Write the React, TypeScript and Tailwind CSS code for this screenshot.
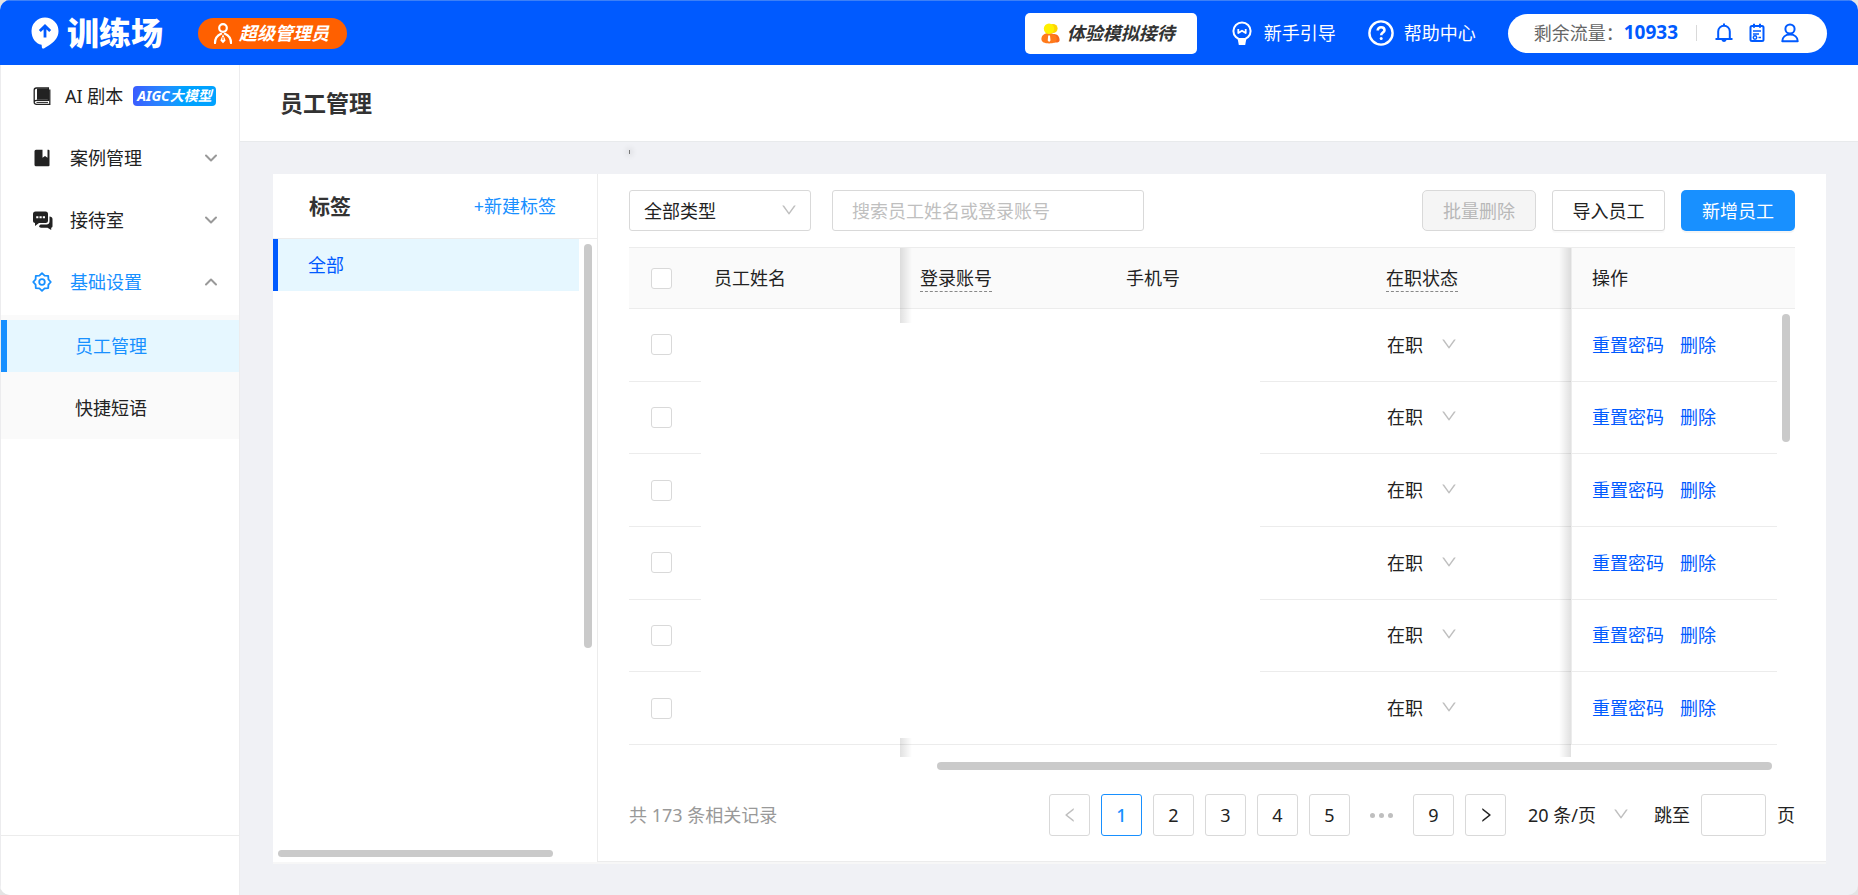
import { useState } from 'react';
import { AiOutlineDown, AiOutlineLeft, AiOutlineRight } from 'react-icons/ai';
import { ChevronDown, ChevronUp } from 'lucide-react';
import clsx from 'clsx';

type Employee = {
  id: number;
  status: string;
};

const employees: Employee[] = [1, 2, 3, 4, 5, 6].map(id => ({ id, status: '在职' }));

const pages = [1, 2, 3, 4, 5];

function LogoIcon() {
  return (
    <svg width="28" height="32" viewBox="0 0 28 32" fill="none">
      <path d="M14 0.5a13.5 13.5 0 0 1 13.5 13.5c0 6.2-3.6 10.2-8 13.2-2.4 1.7-4.6 3.2-6.6 4.2-1 .5-1.9 0-2-1l-.3-2.6C4.600 26.800.5 21 .5 14A13.500 13.500 0 0 1 14 .5z" fill="#fff" />
      <path d="M14 20.500V9.500M8.800 14 14 9l5.200 5" stroke="#005aff" strokeWidth="2.800" />
    </svg>
  );
}

function AdminIcon() {
  return (
    <svg width="20" height="21" viewBox="0 0 20 21" fill="none" stroke="#fff" strokeWidth="2.200">
      <circle cx="10" cy="5" r="3.800" />
      <path d="M2 20c0-4.500 2.200-7.500 6-9.200M18 20c0-4.500-2.200-7.500-6-9.200" strokeLinecap="round" />
      <path d="M10 11l2.600 6.500L10 20.200l-2.600-2.700z" fill="#fff" stroke="none" />
      <path d="M10 14v3" stroke="#ff6000" strokeWidth="1" />
    </svg>
  );
}

function ReceptionIcon() {
  return (
    <svg width="19" height="21" viewBox="0 0 19 21">
      <circle cx="12" cy="5.500" r="4.600" fill="#ffd500" />
      <path d="M9 19.500c0-5 1-8.500 4-8.500 3.500 0 5.600 2.800 5.600 6.200 0 1.700-1.600 2.300-3.600 2.300z" fill="#f9661b" />
      <path d="M.4 16c0-3.600 3-6 7.600-6s7.800 2.400 7.800 6c0 3.200-3.200 4.400-7.700 4.400S.4 19.200.4 16z" fill="#ff7a1a" />
      <path d="M7.200 12.500h1.800l.5 5-1.400 1.400-1.400-1.400z" fill="#fff" />
      <circle cx="8" cy="5.800" r="5.200" fill="#fff000" />
    </svg>
  );
}

function BulbIcon() {
  return (
    <svg width="20" height="24" viewBox="0 0 20 24" fill="none">
      <circle cx="10" cy="10" r="8.600" stroke="#fff" strokeWidth="2" />
      <path d="M6.300 8v4l3.700-2.300 3.700 2.300V8" stroke="#fff" strokeWidth="1.800" strokeLinejoin="round" />
      <path d="M5.500 17h9l-1.300 7H6.800z" fill="#fff" />
    </svg>
  );
}

function HelpIcon() {
  return (
    <svg width="26" height="26" viewBox="0 0 26 26" fill="none" stroke="#fff">
      <circle cx="13" cy="13" r="11.600" strokeWidth="2.400" />
      <path d="M9.700 10.500c0-2 1.400-3.300 3.400-3.300s3.400 1.200 3.400 3c0 2.300-3.300 2.500-3.300 5" strokeWidth="2.600" />
      <circle cx="13.200" cy="18.400" r="1.500" fill="#fff" stroke="none" />
    </svg>
  );
}

function BellIcon() {
  return (
    <svg width="18" height="20" viewBox="0 0 18 20" fill="none" stroke="#005aff" strokeWidth="2">
      <path d="M3.200 16V8.500a5.800 5.800 0 0 1 11.600 0V16M.5 16h17M9 .5v2" />
      <path d="M6.500 17h5c-.3 1.300-1.300 2-2.500 2s-2.200-.7-2.500-2z" fill="#005aff" stroke="none" />
    </svg>
  );
}

function NoteIcon() {
  return (
    <svg width="16" height="20" viewBox="0 0 16 20" fill="none" stroke="#005aff">
      <rect x="1.500" y="3" width="13" height="15" rx="1.500" strokeWidth="2" />
      <path d="M5 .8v4M11 .8v4" strokeWidth="2" />
      <path d="M4 8h8M4 11h6" strokeWidth="1.500" />
      <circle cx="6" cy="14.500" r="1.700" strokeWidth="1.500" />
      <path d="M9.500 14.500h2.500" strokeWidth="1.500" />
    </svg>
  );
}

function UserIcon() {
  return (
    <svg width="18" height="20" viewBox="0 0 18 20" fill="none" stroke="#005aff" strokeWidth="2">
      <circle cx="9" cy="6" r="4.600" />
      <path d="M1.300 18.200c0-4 3-6.600 7.700-6.600s7.700 2.600 7.700 6.600z" strokeLinejoin="round" />
    </svg>
  );
}

function BookIcon() {
  return (
    <svg width="18" height="19" viewBox="0 0 18 19" fill="none">
      <path d="M16.800 2.500v14.800H3.600c-1.500 0-2.400-.8-2.400-2.100V3.200C1.200 1.800 2 1 3.400 1h12v12.300H3.600c-1.400 0-2.300.7-2.400 1.800" stroke="#222" strokeWidth="1.300" />
      <path d="M4 1.500h11.400v11.200H4z" fill="#222" />
      <path d="M3.500 15.400H15" stroke="#222" strokeWidth="1" />
    </svg>
  );
}

function CaseIcon() {
  return (
    <svg width="18" height="18" viewBox="0 0 18 18">
      <path d="M3 .8h6.500v8L12 7l2.500 1.800v-8h1a1 1 0 0 1 1 1v14.400a1 1 0 0 1-1 1H3a1.500 1.500 0 0 1-1.500-1.500V2.300A1.500 1.500 0 0 1 3 .8z" fill="#222" />
    </svg>
  );
}

function ChatIcon() {
  return (
    <svg width="20" height="19" viewBox="0 0 20 19">
      <path d="M2.500.5h10A2.500 2.500 0 0 1 15 3v6.500a2.500 2.500 0 0 1-2.500 2.500H6l-4 3v-3A2.200 2.200 0 0 1 0 9.600V3A2.500 2.500 0 0 1 2.500.5z" fill="#222" />
      <path d="M16.500 5.500c1.800 0 3 1 3 2.500v7c0 1-.5 1.500-1.300 1.700V19l-3.700-2.300H8c-1 0-1.800-.6-2-1.700l1.500-1.400h6c1.800 0 3-1.200 3-3z" fill="#222" />
      <path d="M3.200 5.200h2.200v2H3.200zM6.500 5.200h2.200v2H6.500zM9.800 5.200H12v2H9.800z" fill="#fff" />
    </svg>
  );
}

function GearIcon() {
  return (
    <svg width="20" height="20" viewBox="0 0 20 20" fill="none" stroke="#1890ff" strokeWidth="1.800" strokeLinejoin="round">
      <path d="M10 1.200 12.600 3.600 16.200 3.800 16.400 7.400 18.800 10 16.400 12.600 16.200 16.200 12.600 16.400 10 18.800 7.400 16.400 3.800 16.200 3.600 12.600 1.200 10 3.600 7.400 3.800 3.800 7.400 3.600z" />
      <circle cx="10" cy="10" r="2.800" />
    </svg>
  );
}

function Header() {
  return (
    <header className="flex h-[65px] shrink-0 items-center border-t border-[#3d80f6] bg-[#005aff] pr-[31px] pl-[31px] text-lg text-white">
      <div className="flex items-center gap-2">
        <LogoIcon />
        <span className="text-[32px] leading-8 font-black">训练场</span>
      </div>
      <div className="ml-[35px] flex h-[31px] items-center gap-[6px] rounded-full bg-[#ff6000] pr-[18px] pl-[15px]">
        <AdminIcon />
        <span className="font-bold italic">超级管理员</span>
      </div>

      <button type="button" className="ml-auto flex h-[41px] items-center gap-[7px] rounded-[5px] bg-white pr-[22px] pl-4 font-bold text-[#333] italic">
        <ReceptionIcon />
        <span>体验模拟接待</span>
      </button>
      <a href="#" className="ml-[35px] flex items-center gap-3">
        <BulbIcon />
        新手引导
      </a>
      <a href="#" className="ml-8 flex items-center gap-[10px]">
        <HelpIcon />
        帮助中心
      </a>
      <div className="ml-8 flex h-[39px] items-center rounded-full bg-white pr-7 pl-[26px] text-[#666]">
        <span>剩余流量：</span>
        <span className="text-[19px] font-bold text-[#005aff]">10933</span>
        <span className="mx-[18px] h-4 w-px bg-[#d9d9d9]" />
        <div className="flex items-center gap-4">
          <button type="button" aria-label="消息"><BellIcon /></button>
          <button type="button" aria-label="记录"><NoteIcon /></button>
          <button type="button" aria-label="账户"><UserIcon /></button>
        </div>
      </div>
    </header>
  );
}

function Sidebar() {
  return (
    <aside className="flex w-[240px] shrink-0 flex-col border-r border-l border-[#ececee] bg-white text-[#222]">
      <nav className="flex flex-1 flex-col gap-[10px] pt-[5px]">
        <a href="#" className="flex h-[52px] items-center pl-8">
          <BookIcon />
          <span className="ml-[14px]">AI 剧本</span>
          <span className="ml-[10px] rounded-sm bg-linear-to-r from-[#3a5cff] to-[#00a2ff] to-60% px-1 text-sm font-bold text-white italic">AIGC大模型</span>
        </a>
        <button type="button" className="flex h-[52px] items-center pr-[18px] pl-8">
          <CaseIcon />
          <span className="ml-[19px]">案例管理</span>
          <ChevronDown className="ml-auto size-5 text-[#999]" strokeWidth={2.4} />
        </button>
        <button type="button" className="flex h-[52px] items-center pr-[18px] pl-8">
          <ChatIcon />
          <span className="ml-[17px]">接待室</span>
          <ChevronDown className="ml-auto size-5 text-[#999]" strokeWidth={2.4} />
        </button>
        <div>
          <button type="button" className="flex h-[52px] w-full items-center pr-[18px] pl-[31px] text-[#1890ff]">
            <GearIcon />
            <span className="ml-[18px]">基础设置</span>
            <ChevronUp className="ml-auto size-5 text-[#999]" strokeWidth={2.4} />
          </button>
          <div className="mt-[7px] flex flex-col gap-[10px] bg-[#fafafa] py-[5px]">
            <a href="#" className="flex h-[52px] items-center border-l-[6px] border-[#1890ff] bg-[#e6f7ff] pl-[68px] text-[#1890ff]">
              员工管理
            </a>
            <a href="#" className="flex h-[52px] items-center pl-[74px]">
              快捷短语
            </a>
          </div>
        </div>
      </nav>
      <div className="h-[60px] border-t border-[#ececec]" />
    </aside>
  );
}

function TagPanel() {
  return (
    <section className="relative flex w-[325px] shrink-0 flex-col border-r border-[#ececec]">
      <div className="flex h-[65px] items-center justify-between border-b border-[#ececec] pr-[41px] pl-9">
        <h2 className="text-[21px] font-bold text-[#333]">标签</h2>
        <button type="button" className="text-[#1890ff]">+新建标签</button>
      </div>
      <button type="button" className="mr-[18px] flex h-[52px] items-center border-l-[5px] border-[#005aff] bg-[#e6f7ff] pl-[30px] text-[#005aff]">
        全部
      </button>
      {/* Scrollbar thumbs */}
      <div className="absolute top-[70px] right-[5px] h-[404px] w-2 rounded-full bg-[#cacaca]" />
      <div className="absolute bottom-[5px] left-[5px] h-[7px] w-[275px] rounded-full bg-[#cacaca]" />
    </section>
  );
}

function EmployeeTable() {
  const [checked, setChecked] = useState<number[]>([]);

  const toggle = (id: number) => {
    setChecked(checked.includes(id) ? checked.filter(item => item !== id) : [...checked, id]);
  };

  const toggleAll = () => {
    setChecked(checked.length === employees.length ? [] : employees.map(item => item.id));
  };

  const checkbox = 'block mx-auto size-[21px] appearance-none rounded-[3px] border border-[#d9d9d9] bg-white checked:border-[#1890ff] checked:bg-[#1890ff]';

  return (
    <div className="relative mt-4 flex-1">
      <div className="relative h-[510px] overflow-hidden">
        <table className="h-[498px] w-full table-fixed border-separate border-spacing-0 text-left">
          <colgroup>
            <col className="w-[65px]" />
            <col className="w-[206px]" />
            <col className="w-[206px]" />
            <col />
            <col className="w-[205px]" />
            <col className="w-[206px]" />
            <col className="w-[18px]" />
          </colgroup>
          <thead>
            <tr className="h-[62px] bg-[#fafafa] *:border-y *:border-[#ececec] *:font-normal">
              <th>
                <input type="checkbox" aria-label="全选" className={checkbox} checked={checked.length === employees.length} onChange={toggleAll} />
              </th>
              <th className="px-5">员工姓名</th>
              <th className="px-5"><span className="border-b border-dashed border-[#888] pb-px">登录账号</span></th>
              <th className="px-5">手机号</th>
              <th className="px-5"><span className="border-b border-dashed border-[#888] pb-px">在职状态</span></th>
              <th className="border-l px-5">操作</th>
              <th />
            </tr>
          </thead>
          <tbody>
            {employees.map(employee => (
              <tr key={employee.id} className="*:border-b *:border-[#ececec]">
                <td>
                  <input type="checkbox" aria-label="选择员工" className={checkbox} checked={checked.includes(employee.id)} onChange={() => toggle(employee.id)} />
                </td>
                <td />
                <td />
                <td />
                <td className="px-5">
                  <div className="relative w-[72px]">
                    <select aria-label="在职状态" className="w-full appearance-none bg-transparent pl-px outline-none" defaultValue={employee.status}>
                      <option>在职</option>
                      <option>离职</option>
                    </select>
                    <AiOutlineDown className="pointer-events-none absolute top-1 right-0 size-[18px] text-[#bfbfbf]" />
                  </div>
                </td>
                <td className="border-l px-5">
                  <div className="flex gap-4 text-[#005aff]">
                    <a href="#">重置密码</a>
                    <a href="#">删除</a>
                  </div>
                </td>
                <td className="border-none" />
              </tr>
            ))}
          </tbody>
        </table>
        {/* Shadows along the fixed columns */}
        <div className="absolute top-px bottom-0 left-[271px] w-3 bg-linear-to-r from-black/12 to-transparent" />
        <div className="absolute top-px right-[224px] bottom-0 w-3 bg-linear-to-l from-black/12 to-transparent" />
        <div className="absolute top-[76px] right-[535px] bottom-[19px] left-[72px] bg-white" />
        <div className="absolute top-[67px] right-[5px] h-[128px] w-2 rounded-full bg-[#cacaca]" />
      </div>
      <div className="mt-[5px] mr-[23px] ml-[308px] h-2 rounded-full bg-[#cacaca]" />
    </div>
  );
}

function Pagination() {
  const [current, setCurrent] = useState(1);
  const pageButton = 'flex h-[42px] w-[41px] items-center justify-center rounded-[3px] border';

  return (
    <div className="mb-[25px] flex items-center">
      <span className="mr-auto text-[#999]">共 173 条相关记录</span>
      <div className="flex items-center gap-[11px]">
        <button type="button" aria-label="上一页" disabled className={clsx(pageButton, 'border-[#d9d9d9] text-[#bfbfbf]')}>
          <AiOutlineLeft className="size-[18px]" />
        </button>
        {pages.map(page => (
          <button
            key={page}
            type="button"
            onClick={() => setCurrent(page)}
            className={clsx(pageButton, page === current ? 'border-[#1890ff] font-medium text-[#1890ff]' : 'border-[#d9d9d9]')}
          >
            {page}
          </button>
        ))}
        <span className="flex w-[41px] justify-center gap-1">
          <i className="size-[5px] rounded-full bg-[#bfbfbf]" />
          <i className="size-[5px] rounded-full bg-[#bfbfbf]" />
          <i className="size-[5px] rounded-full bg-[#bfbfbf]" />
        </span>
        <button type="button" className={clsx(pageButton, 'border-[#d9d9d9]')}>9</button>
        <button type="button" aria-label="下一页" className={clsx(pageButton, 'border-[#d9d9d9]')}>
          <AiOutlineRight className="size-[18px]" />
        </button>
      </div>
      <div className="relative ml-[22px] w-[102px]">
        <select aria-label="每页条数" className="w-full appearance-none bg-transparent outline-none">
          <option>20 条/页</option>
          <option>50 条/页</option>
        </select>
        <AiOutlineDown className="pointer-events-none absolute top-1 right-0 size-[18px] text-[#bfbfbf]" />
      </div>
      <label className="ml-6 flex items-center gap-[11px]">
        跳至
        <input type="text" className="h-[42px] w-[65px] rounded-[3px] border border-[#d9d9d9] px-2 outline-none" />
        页
      </label>
    </div>
  );
}

export default function App() {
  return (
    <div className="h-screen bg-[#e4e4e4]">
      <div className="flex h-full flex-col overflow-hidden rounded-[10px] bg-[#f0f1f5] font-['Noto_Sans','Noto_Sans_CJK_SC',sans-serif] text-lg leading-7 text-[#222]">
        <Header />
        <div className="flex min-h-0 flex-1">
          <Sidebar />
          <main className="flex min-w-0 flex-1 flex-col">
            <div className="flex h-[77px] shrink-0 items-center border-b border-[#e8eaec] bg-white px-10">
              <h1 className="text-[23px] font-bold text-[#333]">员工管理</h1>
            </div>
            <div className="relative flex flex-1 px-8 pt-8 pb-[31px] pl-[33px]">
              {/* Collapsed popover anchor */}
              <span className="absolute top-2 left-[389px] h-1 w-px bg-[#777] shadow-[0_0_6px_1px_rgba(0,0,0,0.2)]" />
              <div className="flex flex-1 border-b-2 border-[#f7f7f7] bg-white">
                <TagPanel />
                <section className="flex min-w-0 flex-1 flex-col border-b border-[#ececec] pr-[31px] pl-[31px] pt-4">
                  {/* Filters and actions */}
                  <div className="flex items-center">
                    <div className="relative w-[182px]">
                      <select aria-label="员工类型" className="h-[41px] w-full appearance-none rounded-[3px] border border-[#d9d9d9] bg-white px-[14px] outline-none">
                        <option>全部类型</option>
                      </select>
                      <AiOutlineDown className="pointer-events-none absolute top-[11px] right-[13px] size-[18px] text-[#bfbfbf]" />
                    </div>
                    <input
                      type="text"
                      aria-label="搜索员工"
                      placeholder="搜索员工姓名或登录账号"
                      className="ml-[21px] h-[41px] w-[312px] rounded-[3px] border border-[#d9d9d9] px-[19px] outline-none placeholder:text-[#bfbfbf]"
                    />
                    <div className="ml-auto flex gap-4">
                      <button type="button" disabled className="h-[41px] w-[114px] rounded-[5px] border border-[#d9d9d9] bg-[#f5f5f5] text-[#b8b8b8]">
                        批量删除
                      </button>
                      <button type="button" className="h-[41px] w-[113px] rounded-[3px] border border-[#d9d9d9] bg-white shadow-[0_2px_0_rgba(0,0,0,0.02)]">
                        导入员工
                      </button>
                      <button type="button" className="h-[41px] w-[114px] rounded-[5px] bg-[#1890ff] text-white shadow-[0_2px_0_rgba(0,0,0,0.04)]">
                        新增员工
                      </button>
                    </div>
                  </div>
                  <EmployeeTable />
                  <Pagination />
                </section>
              </div>
            </div>
          </main>
        </div>
      </div>
    </div>
  );
}
